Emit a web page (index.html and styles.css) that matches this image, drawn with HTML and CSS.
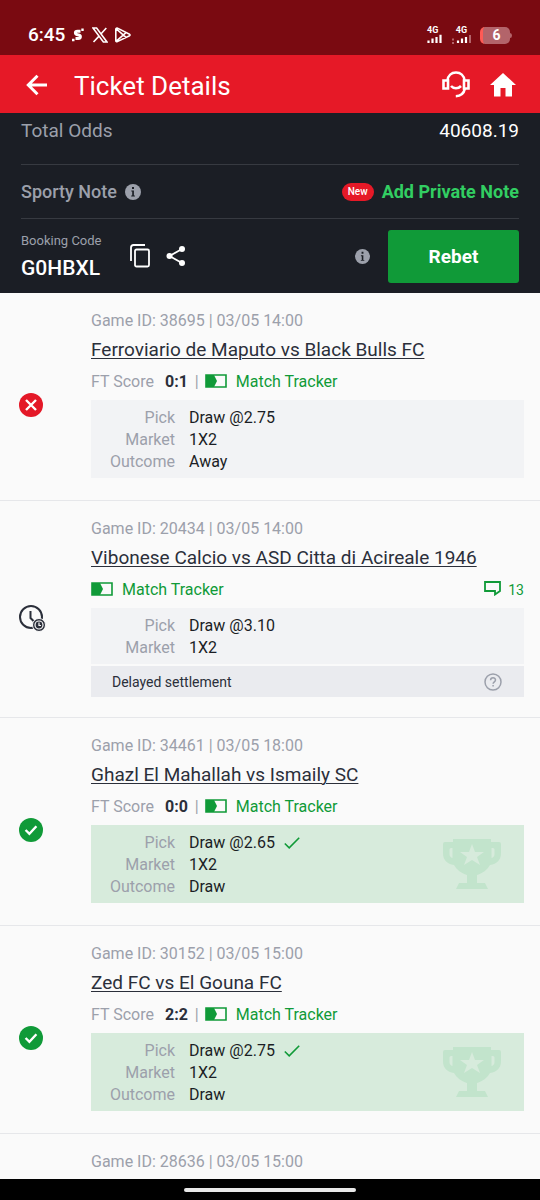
FILE: index.html
```html
<!DOCTYPE html>
<html lang="en">
<head>
<meta charset="utf-8">
<meta name="viewport" content="width=device-width, initial-scale=1">
<title>Ticket Details</title>
<link rel="stylesheet" href="styles.css">
</head>
<body>
<svg class="defs" aria-hidden="true">
  <symbol id="info" viewBox="0 0 16 16"><circle cx="8" cy="8" r="8" fill="currentColor"/><path d="M6.3 6.6h2.6v5h1v1H6.2v-1h1v-4h-.9zM7 3h2v2.1H7z" fill="#1b1e25"/></symbol>
  <symbol id="tracker" viewBox="0 0 22 14"><path d="M1 1h20v12H1z" fill="none" stroke="currentColor" stroke-width="1.6"/><path d="M1 1h8l3 6-3 6H1z" fill="currentColor"/></symbol>
  <symbol id="won" viewBox="0 0 24 24"><circle cx="12" cy="12" r="12" fill="#109a38"/><path d="M6.6 12l3.8 3.8 7-7.6" fill="none" stroke="#fff" stroke-width="2.4"/></symbol>
  <symbol id="lost" viewBox="0 0 24 24"><circle cx="12" cy="12" r="12" fill="#e41827"/><path d="M7 7l10 10M17 7l-10 10" stroke="#fff" stroke-width="2.4"/></symbol>
  <symbol id="tick" viewBox="0 0 16 12"><path d="M.8 6.5l4.4 4.3L15.2.8" fill="none" stroke="currentColor" stroke-width="1.6"/></symbol>
  <symbol id="trophy" viewBox="0 0 58 51"><path fill="currentColor" fill-rule="evenodd" d="M10 0h38v3h8q2 0 2 2v9c0 7-4 11-11 12-3 5-7 8-13 10v8h8l3 6H13l3-6h8v-8c-6-2-10-5-13-10C4 25 0 21 0 14V5q0-2 2-2h8zM8 9q-1.500 0-1.500 1.500V15c0 2 1 3.500 3 4V9zM48.500 9v10c2-.5 3-2 3-4v-4.500Q51.500 9 50 9zM29 5l-3 8h-9l7 5-3 8 8-5 8 5-3-8 7-5h-9z"/></symbol>
</svg>
<div class="screen">
  <div class="status">
    <time class="clock">6:45</time>
    <svg width="12" height="14" viewBox="0 0 12 14"><path d="M8.500 3.300H5.500c-2.800 0-2.800 3 0 3.500l1.200.2c2.400.5 2.200 3.600-.4 3.600H3.500" fill="none" stroke="#fff" stroke-width="3"/><path d="M0 10.800h2.500v2.500H0zM9.300.5h2.400v2.400H9.300z" fill="#fff"/></svg>
    <svg class="x-icon" width="16" height="16" viewBox="0 0 16 16"><path d="M1 1h3.600l10.400 14h-3.600zM14.300 1L8.900 7M6.800 9.400L1.500 15" fill="none" stroke="#fff" stroke-width="1.600"/></svg>
    <svg width="16" height="16" viewBox="0 0 16 16"><path d="M1.500 1.200c-.4.3-.7.6-.7 1v11.600c0 .7.8 1.200 1.500.8l12.200-5.900c.7-.4.7-1.100 0-1.500L2.500 1.100c-.4-.2-.7-.1-1 .1zM1.300 1.800L11 10.400M1.300 14.200L11 5.600" fill="none" stroke="#fff" stroke-width="1.600"/></svg>
    <div class="status-right">
      <span class="net"><span class="net-label">4G</span><svg width="16" height="10" viewBox="0 0 16 10"><path d="M1.500 9V6.500M5.500 9V4.500M9.500 9V3M13.500 9V.8" stroke="#fff" stroke-width="2.200"/></svg></span>
      <span class="net net-2"><span class="net-label">4G</span><svg width="21" height="10" viewBox="0 0 21 10"><path d="M7 9V6.500M11 9V4.500M15 9V3" stroke="#fff" stroke-width="2.200"/><path d="M19 9V1" stroke="#b3646a" stroke-width="2"/><path d="M1 4.500h2v2H1zM1 8h2v2H1z" fill="#b3646a"/></svg></span>
      <span class="power"><span class="battery">6</span><svg width="2" height="5" viewBox="0 0 2 5"><path d="M0 0q2 0 2 2.500T0 5z" fill="#b3646a"/></svg></span>
    </div>
  </div>
  <header class="topbar">
    <button class="icon-btn" aria-label="Back"><svg width="22" height="22" viewBox="0 0 22 22"><path d="M21 11H3M11.500 1.800L2.300 11l9.200 9.200" fill="none" stroke="#fff" stroke-width="3"/></svg></button>
    <h1 class="page-title">Ticket Details</h1>
    <button class="icon-btn" aria-label="Support"><svg width="28" height="27" viewBox="0 0 28 27"><path d="M6 9.500H1.500v8H6zM22 9.500h4.500v8H22zM5.500 9.500C6 4.500 9.500 1.500 14 1.500s8 3 8.500 8M22.800 18c-1 4.500-4 7-9 7.200M9 15c2.600 3 7.200 3 10 0" fill="none" stroke="#fff" stroke-width="2.600"/></svg></button>
    <a class="icon-btn" href="#" aria-label="Home"><svg width="26" height="24" viewBox="0 0 26 24"><path d="M13 0l13 12h-4v11.500h-6.500V15h-5v8.500H4V12H0z" fill="#fff"/></svg></a>
  </header>
  <main class="content">
    <section class="summary">
      <div class="odds"><span class="muted">Total Odds</span><span>40608.19</span></div>
      <div class="note">
        <span class="note-label">Sporty Note</span>
        <svg class="muted" width="16" height="16"><use href="#info"/></svg>
        <span class="new">New</span>
        <button class="add-note">Add Private Note</button>
      </div>
      <div class="booking">
        <div class="code"><span class="code-label">Booking Code</span><strong class="code-value">G0HBXL</strong></div>
        <button class="icon-btn" aria-label="Copy"><svg width="20" height="24" viewBox="0 0 20 24"><path d="M1 17V3.500Q1 1 3.500 1H15" fill="none" stroke="#fff" stroke-width="1.800"/><rect x="5" y="5.500" width="14" height="17" rx="1.500" fill="none" stroke="#fff" stroke-width="1.800"/></svg></button>
        <button class="icon-btn" aria-label="Share"><svg width="20" height="20" viewBox="0 0 20 20"><path d="M16 3L3.500 10 16 17" fill="none" stroke="#fff" stroke-width="1.800"/><circle cx="16" cy="3" r="3" fill="#fff"/><circle cx="3.500" cy="10" r="3" fill="#fff"/><circle cx="16" cy="17" r="3" fill="#fff"/></svg></button>
        <svg class="booking-info muted" width="15" height="15"><use href="#info"/></svg>
        <button class="rebet">Rebet</button>
      </div>
    </section>

    <article class="bet">
      <div class="result"><svg width="24" height="24" role="img" aria-label="Lost"><use href="#lost"/></svg></div>
      <div class="bet-body">
        <p class="game-id">Game ID: 38695 | 03/05 14:00</p>
        <h2 class="teams"><a href="#">Ferroviario de Maputo vs Black Bulls FC</a></h2>
        <div class="meta"><span class="ft">FT Score</span><b class="score">0:1</b><span class="bar">|</span><a class="tracker" href="#"><svg width="22" height="14"><use href="#tracker"/></svg>Match Tracker</a></div>
        <dl class="pick"><dt>Pick</dt><dd>Draw @2.75</dd><dt>Market</dt><dd>1X2</dd><dt>Outcome</dt><dd>Away</dd></dl>
      </div>
    </article>

    <article class="bet bet-delayed">
      <div class="result"><svg width="27" height="27" viewBox="0 0 27 27" role="img" aria-label="Pending"><circle cx="12" cy="12" r="11" fill="none" stroke="#2b2f3a" stroke-width="2"/><path d="M11.500 6v7l4 4" fill="none" stroke="#2b2f3a" stroke-width="2"/><circle cx="20" cy="20" r="6.500" fill="#2b2f3a" stroke="#fafafa"/><circle cx="20" cy="20" r="4" fill="none" stroke="#fafafa" stroke-width="1.200"/><path d="M20 17.500V20.500h2" fill="none" stroke="#fafafa" stroke-width="1.200"/></svg></div>
      <div class="bet-body">
        <p class="game-id">Game ID: 20434 | 03/05 14:00</p>
        <h2 class="teams"><a href="#">Vibonese Calcio vs ASD Citta di Acireale 1946</a></h2>
        <div class="meta"><a class="tracker" href="#"><svg width="22" height="14"><use href="#tracker"/></svg>Match Tracker</a><a class="comments" href="#"><svg width="17" height="15" viewBox="0 0 17 15"><path d="M1 1h15v9l-5 3.500V10H1z" fill="none" stroke="currentColor" stroke-width="1.800"/></svg>13</a></div>
        <dl class="pick"><dt>Pick</dt><dd>Draw @3.10</dd><dt>Market</dt><dd>1X2</dd></dl>
        <div class="delayed"><span>Delayed settlement</span><button class="icon-btn" aria-label="Help"><svg width="18" height="18" viewBox="0 0 18 18"><g fill="none" stroke="#9ca0ab" stroke-width="1.500"><circle cx="9" cy="9" r="8"/><path d="M6.600 7.200c0-3.200 4.900-3.200 4.900-.2 0 1.800-2.400 1.900-2.400 3.800M9.100 12v1.600"/></g></svg></button></div>
      </div>
    </article>

    <article class="bet">
      <div class="result"><svg width="24" height="24" role="img" aria-label="Won"><use href="#won"/></svg></div>
      <div class="bet-body">
        <p class="game-id">Game ID: 34461 | 03/05 18:00</p>
        <h2 class="teams"><a href="#">Ghazl El Mahallah vs Ismaily SC</a></h2>
        <div class="meta"><span class="ft">FT Score</span><b class="score">0:0</b><span class="bar">|</span><a class="tracker" href="#"><svg width="22" height="14"><use href="#tracker"/></svg>Match Tracker</a></div>
        <div class="won-box"><dl class="pick"><dt>Pick</dt><dd>Draw @2.65<svg class="tick" width="16" height="12"><use href="#tick"/></svg></dd><dt>Market</dt><dd>1X2</dd><dt>Outcome</dt><dd>Draw</dd></dl><svg class="trophy" width="58" height="51"><use href="#trophy"/></svg></div>
      </div>
    </article>

    <article class="bet">
      <div class="result"><svg width="24" height="24" role="img" aria-label="Won"><use href="#won"/></svg></div>
      <div class="bet-body">
        <p class="game-id">Game ID: 30152 | 03/05 15:00</p>
        <h2 class="teams"><a href="#">Zed FC vs El Gouna FC</a></h2>
        <div class="meta"><span class="ft">FT Score</span><b class="score">2:2</b><span class="bar">|</span><a class="tracker" href="#"><svg width="22" height="14"><use href="#tracker"/></svg>Match Tracker</a></div>
        <div class="won-box"><dl class="pick"><dt>Pick</dt><dd>Draw @2.75<svg class="tick" width="16" height="12"><use href="#tick"/></svg></dd><dt>Market</dt><dd>1X2</dd><dt>Outcome</dt><dd>Draw</dd></dl><svg class="trophy" width="58" height="51"><use href="#trophy"/></svg></div>
      </div>
    </article>

    <article class="bet bet-last">
      <div class="result"></div>
      <div class="bet-body"><p class="game-id">Game ID: 28636 | 03/05 15:00</p></div>
    </article>
  </main>
  <div class="navbar"><span class="handle"></span></div>
</div>
</body>
</html>
```
FILE: styles.css
```css
* { box-sizing: border-box; }
body { margin: 0; font-family: Roboto, "Liberation Sans", sans-serif; background: #fafafa; color: #2b2f3a; }
button { font: inherit; border: 0; padding: 0; background: none; cursor: pointer; }
a { color: inherit; }
h1, h2, p, dl, dd { margin: 0; font-weight: 400; }
svg { display: block; flex: none; }
.defs { position: absolute; width: 0; height: 0; }
.screen { display: flex; flex-direction: column; height: 100vh; }
.icon-btn { display: block; flex: none; }
.muted { color: #9ca0ab; }

.status { display: flex; align-items: center; flex: none; height: 55px; padding: 15px 28px 0 28px; gap: 7px; background: #7a0a11; color: #fff; }
.clock { font-size: 19px; font-weight: 500; line-height: 22px; }
.x-icon { margin-left: 1px; }
.status-right { display: flex; align-items: center; gap: 8px; margin-left: auto; }
.net { display: flex; flex-direction: column; align-items: flex-end; }
.net-label { align-self: flex-start; font-size: 9px; font-weight: 700; line-height: 7px; }
.net-2 .net-label { align-self: center; }
.power { display: flex; align-items: center; }
.battery { width: 30px; height: 17px; border-radius: 5px; border-left: 3px solid #ff5a55; background: #b3646a; font-size: 14px; font-weight: 700; line-height: 17px; text-align: center; }

.topbar { display: flex; align-items: center; flex: none; height: 58px; padding: 1px 24px 0 26px; background: #e61927; color: #fff; }
.page-title { flex: 1; margin-left: 26px; padding-top: 2px; font-size: 26px; line-height: 32px; }
.topbar a { margin-left: 20px; }

.content { flex: 1; min-height: 0; overflow: hidden; }
.summary { padding: 0 21px; background: #1b1e25; color: #fff; font-size: 18px; }
.odds { display: flex; justify-content: space-between; padding: 7px 0 22px; font-size: 19px; line-height: 22px; border-bottom: 1px solid #373a41; }
.note { display: flex; align-items: center; height: 54px; border-bottom: 1px solid #373a41; font-weight: 500; }
.note-label { margin-right: 8px; color: #9ca0ab; }
.new { margin-left: auto; padding: 0 6px; border-radius: 9px; background: #e61927; font-size: 10px; line-height: 18px; }
.add-note { margin-left: 8px; color: #32ce62; font-weight: 700; }
.booking { display: flex; align-items: center; height: 74px; }
.code { display: flex; flex-direction: column; margin-right: 29px; padding-top: 4px; }
.code-label { font-size: 13px; line-height: 20px; color: #9ca0ab; }
.code-value { font-size: 21px; line-height: 34px; font-weight: 500; }
.booking .icon-btn + .icon-btn { margin-left: 16px; }
.booking-info { margin-left: auto; }
.rebet { width: 131px; height: 53px; margin-left: 18px; border-radius: 3px; background: #109a38; color: #fff; font-size: 19px; font-weight: 700; }

.bet { display: flex; align-items: center; padding: 18px 16px 22px 0; border-bottom: 1px solid #e6e7ea; font-size: 16px; }
.bet-delayed { padding-bottom: 20px; }
.result { flex: none; width: 91px; padding: 20px 0 0 19px; }
.bet-body { flex: 1; min-width: 0; }
.game-id { color: #9ca0ab; line-height: 20px; }
.teams { margin: 7px 0 10px; font-size: 19px; line-height: 24px; }
.teams a { text-decoration-thickness: 1px; text-underline-offset: 2px; }
.meta { display: flex; align-items: center; margin-bottom: 8px; line-height: 20px; }
.ft, .bar { color: #9ca0ab; }
.score { margin: 0 7px 0 11px; font-weight: 700; }
.bar { margin-right: 6px; }
.tracker, .comments { display: flex; align-items: center; gap: 9px; color: #109a38; text-decoration: none; }
.tracker svg, .comments svg { margin-bottom: 3px; }
.comments { margin-left: auto; gap: 7px; font-size: 14px; }
.pick { display: grid; grid-template-columns: 84px 1fr; column-gap: 14px; padding: 7px 0 5px; line-height: 22px; background: #f2f3f5; }
.pick dt { color: #9ca0ab; text-align: right; }
.pick dd { display: flex; align-items: center; color: #1b1e25; }
.tick { margin-left: 9px; color: #109a38; }
.won-box { display: flex; align-items: center; padding-right: 23px; background: #d7ebdc; }
.won-box .pick { flex: 1; background: none; }
.trophy { color: #c2e4cc; }
.delayed { display: flex; align-items: center; justify-content: space-between; height: 31px; margin-top: 2px; padding: 0 22px 0 21px; background: #eaebef; font-size: 14px; }
.bet-last { border-bottom: 0; }
.bet-last .result { padding: 0; }

.navbar { display: flex; align-items: center; justify-content: center; flex: none; height: 21px; background: #000; }
.handle { width: 172px; height: 4px; border-radius: 2px; background: #e8e8e8; }
```
